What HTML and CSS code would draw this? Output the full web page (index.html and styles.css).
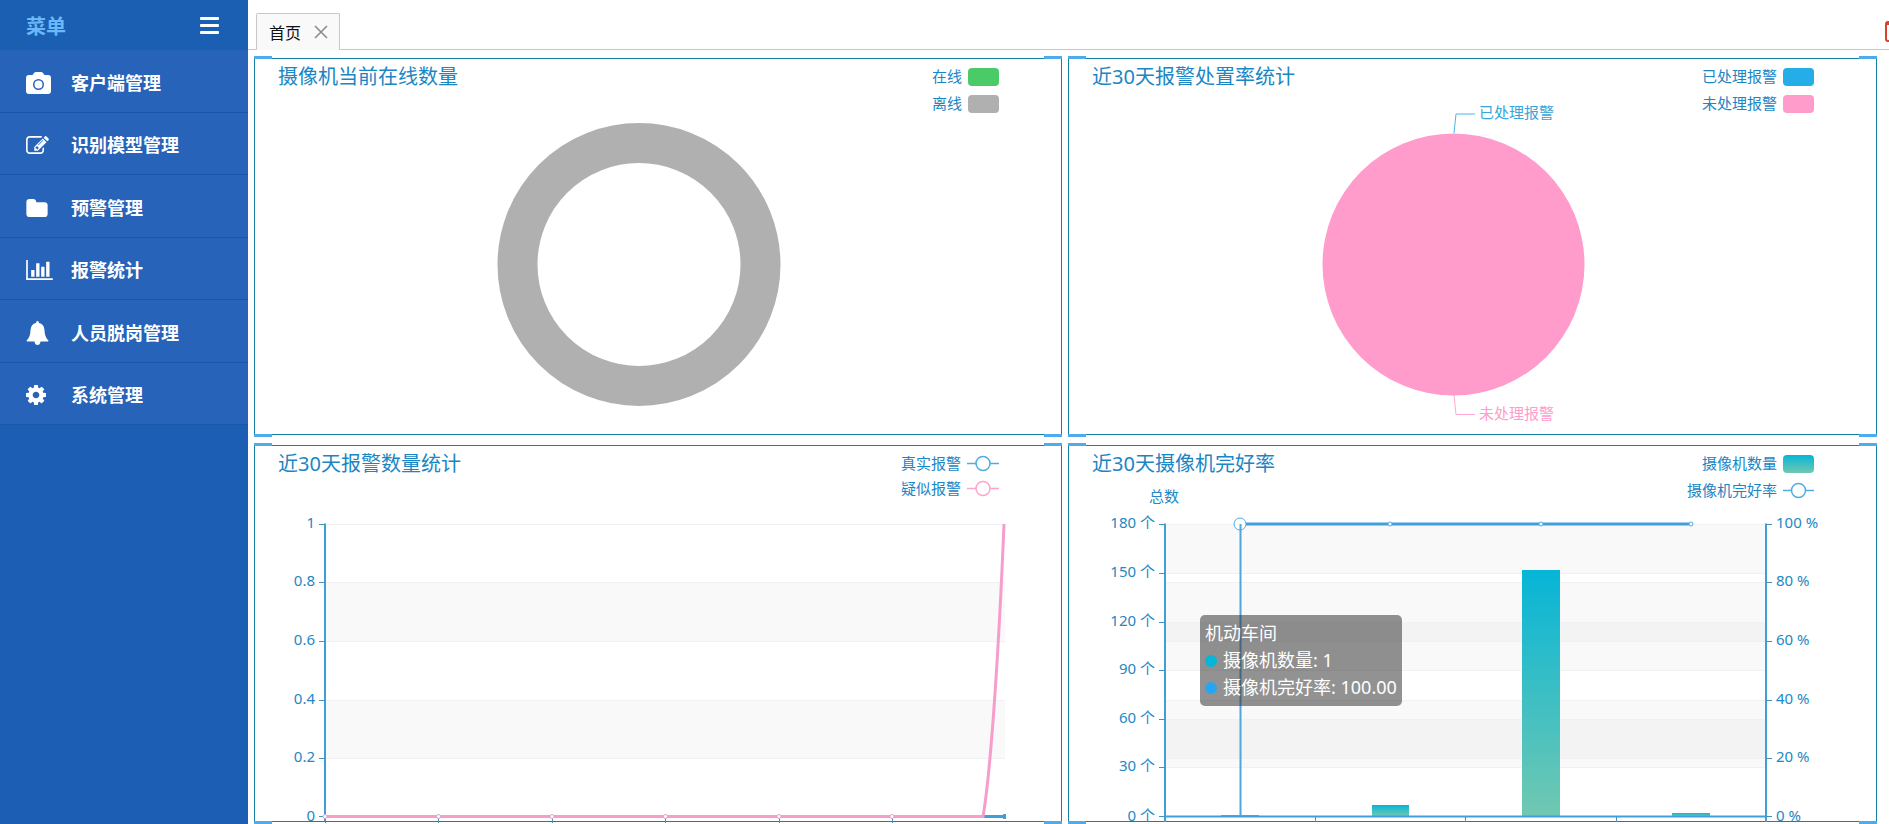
FILE: index.html
```html
<!DOCTYPE html>
<html lang="zh-CN">
<head>
<meta charset="utf-8">
<title>首页</title>
<link rel="stylesheet" href="styles.css">
</head>
<body>
<div class="app">
  <aside class="sidebar">
    <header class="brand">
      <span class="brand-name">菜单</span>
      <button class="toggle" type="button" aria-label="折叠菜单">
        <svg width="19" height="17" viewBox="0 0 19 17"><rect width="19" height="3" rx="1"/><rect y="7" width="19" height="3" rx="1"/><rect y="14" width="19" height="3" rx="1"/></svg>
      </button>
    </header>
    <nav class="menu">
      <a class="menu-item" href="#client"><span class="menu-icon"><svg width="25" height="22" viewBox="0 0 25 22"><path fill-rule="evenodd" d="M3 3h3.500L8 1Q8.700 0 10 0h5q1.300 0 2 1l1.500 2H22q3 0 3 3v13q0 3-3 3H3q-3 0-3-3V6q0-3 3-3zM12.500 7a5.500 5.500 0 1 0 0 11a5.500 5.500 0 1 0 0-11zM12.500 8.500a4 4 0 1 1 0 8a4 4 0 1 1 0-8z"/></svg></span>客户端管理</a>
      <a class="menu-item" href="#model"><span class="menu-icon"><svg width="23" height="18" viewBox="0 128 1792 1408"><path d="M888 1184l116-116-152-152-116 116v56h96v96h56zm440-720q-16-16-33 1l-350 350q-17 17-1 33t33-1l350-350q17-17 1-33zm80 594v190q0 119-84.500 203.500t-203.500 84.500h-832q-119 0-203.500-84.500t-84.500-203.500v-832q0-119 84.500-203.500t203.500-84.500h832q63 0 117 25 15 7 18 23 3 17-9 29l-49 49q-14 14-32 8-23-6-45-6h-832q-66 0-113 47t-47 113v832q0 66 47 113t113 47h832q66 0 113-47t47-113v-126q0-13 9-22l64-64q15-15 35-7t20 29zm-96-738l288 288-672 672h-288v-288zm444 132l-92 92-288-288 92-92q28-28 68-28t68 28l152 152q28 28 28 68t-28 68z"/></svg></span>识别模型管理</a>
      <a class="menu-item" href="#warning"><span class="menu-icon"><svg width="22" height="18" viewBox="64 128 1664 1408"><path d="M1728 608v704q0 92-66 158t-158 66h-1216q-92 0-158-66t-66-158v-960q0-92 66-158t158-66h320q92 0 158 66t66 158v32h672q92 0 158 66t66 158z"/></svg></span>预警管理</a>
      <a class="menu-item" href="#alarm"><span class="menu-icon"><svg width="27" height="20" viewBox="0 128 2048 1536"><path d="M640 896v512h-256v-512h256zm384-512v1024h-256v-1024h256zm1024 1152v128h-2048v-1536h128v1408h1920zm-640-896v768h-256v-768h256zm384-384v1152h-256v-1152h256z"/></svg></span>报警统计</a>
      <a class="menu-item" href="#absence"><span class="menu-icon"><svg width="23" height="24" viewBox="0 0 23 24"><path d="M11.500 0Q13 0 13 2Q18 3 18.500 9Q18.500 16 22.500 19.500Q22.500 20.500 21.500 20.500H14.500Q14 24 11.500 24Q9 24 8.500 20.500H1.500Q.5 20.500.5 19.500Q4.500 16 4.500 9Q5 3 10 2Q10 0 11.500 0z"/></svg></span>人员脱岗管理</a>
      <a class="menu-item" href="#system"><span class="menu-icon"><svg width="20" height="20" viewBox="128 128 1536 1536"><path d="M1152 896q0-106-75-181t-181-75-181 75-75 181 75 181 181 75 181-75 75-181zm512-109v222q0 12-8 23t-20 13l-185 28q-19 54-39 91 35 50 107 138 10 12 10 25t-9 23q-27 37-99 108t-94 71q-12 0-26-9l-138-108q-44 23-91 38-16 136-29 186-7 28-36 28h-222q-14 0-24.500-8.500t-11.500-21.500l-28-184q-49-16-90-37l-141 107q-10 9-25 9-14 0-25-11-126-114-165-168-7-10-7-23 0-12 8-23 15-21 51-66.500t54-70.500q-27-50-41-99l-183-27q-13-2-21-12.500t-8-23.500v-222q0-12 8-23t19-13l186-28q14-46 39-92-40-57-107-138-10-12-10-24 0-10 9-23 26-36 98.500-107.500t94.500-71.500q13 0 26 10l138 107q44-23 91-38 16-136 29-186 7-28 36-28h222q14 0 24.500 8.500t11.500 21.500l28 184q49 16 90 37l142-107q9-9 24-9 13 0 25 10 129 119 165 170 7 8 7 22 0 12-8 23-15 21-51 66.500t-54 70.500q26 50 41 98l183 28q13 2 21 12.500t8 23.500z"/></svg></span>系统管理</a>
    </nav>
  </aside>

  <main class="main">
    <div class="tabbar">
      <div class="tab">
        <a class="tab-link" href="#home">首页</a>
        <button class="tab-close" type="button" aria-label="关闭"><svg width="14" height="14" viewBox="0 0 14 14"><path d="M1 1l12 12M13 1L1 13"/></svg></button>
      </div>
      <button class="clear" type="button" aria-label="关闭全部"><svg width="20" height="21" viewBox="0 0 20 21"><rect x="1" y="1" width="18" height="19" rx="2"/><path d="M1 3h18"/></svg></button>
    </div>

    <div class="board">
      <section class="panel">
        <header class="panel-head">
          <h2 class="panel-title">摄像机当前在线数量</h2>
          <ul class="legend">
            <li>在线<i class="swatch green"></i></li>
            <li>离线<i class="swatch gray"></i></li>
          </ul>
        </header>
        <svg class="chart" viewBox="0 0 806 375">
          <circle class="ring" cx="384" cy="205.500" r="121.500"/>
        </svg>
      </section>

      <section class="panel">
        <header class="panel-head">
          <h2 class="panel-title">近30天报警处置率统计</h2>
          <ul class="legend">
            <li>已处理报警<i class="swatch blue"></i></li>
            <li>未处理报警<i class="swatch pink"></i></li>
          </ul>
        </header>
        <svg class="chart" viewBox="0 0 807 375">
          <circle class="pie" cx="384.500" cy="205.500" r="131"/>
          <path class="lead lead-blue" d="M385 74L387 55H406"/>
          <text class="label-blue" x="410" y="59">已处理报警</text>
          <path class="lead lead-pink" d="M385 336L387 355.500H406"/>
          <text class="label-pink" x="410" y="360">未处理报警</text>
        </svg>
      </section>

      <section class="panel">
        <header class="panel-head">
          <h2 class="panel-title">近30天报警数量统计</h2>
          <ul class="legend legend-lines">
            <li>真实报警<svg class="marker marker-blue" width="32" height="17" viewBox="0 0 32 17"><path d="M0 8.500h32"/><circle cx="16" cy="8.500" r="7"/></svg></li>
            <li>疑似报警<svg class="marker marker-pink" width="32" height="17" viewBox="0 0 32 17"><path d="M0 8.500h32"/><circle cx="16" cy="8.500" r="7"/></svg></li>
          </ul>
        </header>
        <svg class="chart" viewBox="0 0 806 375">
          <path class="band" d="M70 136h680v59H70zM70 254h680v58H70z"/>
          <path class="grid" d="M70 78.500h680M70 136.500h680M70 195.500h680M70 254.500h680M70 312.500h680"/>
          <path class="axis" d="M70 77.500V375"/>
          <path class="tick" d="M64 78.500h6M64 136.500h6M64 195.500h6M64 254.500h6M64 312.500h6M64 370.500h6M70.500 371v6M183.500 371v6M297.500 371v6M410.500 371v6M524.500 371v6M637.500 371v6"/>
          <g class="end">
            <text x="60" y="82">1</text>
            <text x="60" y="140">0.8</text>
            <text x="60" y="199">0.6</text>
            <text x="60" y="258">0.4</text>
            <text x="60" y="316">0.2</text>
            <text x="60" y="375">0</text>
          </g>
          <path class="line-blue" d="M70 370.500H750M749.500 368v5"/>
          <path class="line-pink" d="M70 370.500H728C736 325 744 200 749 78"/>
          <g class="dot dot-pink"><circle cx="70" cy="370.500" r="2"/><circle cx="183.500" cy="370.500" r="2"/><circle cx="297" cy="370.500" r="2"/><circle cx="410.500" cy="370.500" r="2"/><circle cx="524" cy="370.500" r="2"/><circle cx="637" cy="370.500" r="2"/></g>
        </svg>
      </section>

      <section class="panel">
        <header class="panel-head">
          <h2 class="panel-title">近30天摄像机完好率</h2>
          <ul class="legend">
            <li>摄像机数量<i class="swatch teal"></i></li>
            <li>摄像机完好率<svg class="marker marker-blue" width="31" height="17" viewBox="0 0 31 17"><path d="M0 8.500h31"/><circle cx="15.500" cy="8.500" r="7"/></svg></li>
          </ul>
        </header>
        <svg class="chart" viewBox="0 0 807 375">
          <defs><linearGradient id="bar" x1="0" y1="0" x2="0" y2="1"><stop offset="0" stop-color="#06b5d7"/><stop offset="1" stop-color="#71c8b1"/></linearGradient></defs>
          <path class="band" d="M96 78h601v49H96zM96 176h601v48H96zM96 273h601v48H96z"/>
          <path class="band" d="M96 136h601v59H96zM96 254h601v58H96z"/>
          <path class="grid" d="M96 78.500h601M96 127.500h601M96 176.500h601M96 224.500h601M96 273.500h601M96 321.500h601M96 136.500h601M96 195.500h601M96 254.500h601M96 312.500h601"/>
          <g fill="url(#bar)">
            <rect x="152" y="369" width="38" height="1"/>
            <rect x="303" y="359" width="37" height="11"/>
            <rect x="453" y="124" width="38" height="246"/>
            <rect x="603" y="367" width="38" height="3"/>
          </g>
          <path class="axis" d="M96 77.500V376M697 77.500V376M96 370.500H697"/>
          <path class="tick" d="M90 78.500h6M90 127.500h6M90 176.500h6M90 224.500h6M90 273.500h6M90 321.500h6M90 370.500h6M697 78.500h6M697 136.500h6M697 195.500h6M697 254.500h6M697 312.500h6M697 370.500h6M246.500 371v5M396.500 371v5M547.500 371v5"/>
          <text x="80" y="56">总数</text>
          <g class="end">
            <text x="86" y="82">180 个</text>
            <text x="86" y="131">150 个</text>
            <text x="86" y="180">120 个</text>
            <text x="86" y="228">90 个</text>
            <text x="86" y="277">60 个</text>
            <text x="86" y="325">30 个</text>
            <text x="86" y="375">0 个</text>
          </g>
          <g>
            <text x="707" y="82">100 %</text>
            <text x="707" y="140">80 %</text>
            <text x="707" y="199">60 %</text>
            <text x="707" y="258">40 %</text>
            <text x="707" y="316">20 %</text>
            <text x="707" y="375">0 %</text>
          </g>
          <path class="line-blue" d="M171 78H622"/>
          <g class="dot dot-blue"><circle cx="171" cy="78" r="6"/><circle cx="321" cy="78" r="2"/><circle cx="472" cy="78" r="2"/><circle cx="622" cy="78" r="2"/></g>
          <path class="pointer" d="M171.500 78V370"/>
        </svg>
        <div class="tooltip" role="tooltip">
          <div>机动车间</div>
          <div><i class="bullet cyan"></i>摄像机数量: 1</div>
          <div><i class="bullet sky"></i>摄像机完好率: 100.00</div>
        </div>
      </section>
    </div>
  </main>
</div>
</body>
</html>
```
FILE: styles.css
```css
* {
  box-sizing: border-box;
}

body {
  margin: 0;
  overflow: hidden;
  background: #fff;
  font-family: "Noto Sans", "Noto Sans CJK SC", sans-serif;
  font-size: 15px;
}

button {
  padding: 0;
  border: 0;
  background: none;
}

svg {
  display: block;
}

.app {
  display: grid;
  grid-template-columns: 248px minmax(0, 1fr);
  min-height: 100vh;
}

/* sidebar */
.sidebar {
  background: #1b5eb3;
}

.brand {
  display: flex;
  align-items: center;
  justify-content: space-between;
  height: 50px;
  padding: 1px 29px 0 26px;
  background: #1b5fb2;
}

.brand-name {
  color: #6ab8f8;
  font-size: 20px;
  font-weight: bold;
}

.toggle {
  fill: #fff;
}

.menu {
  display: grid;
  grid-auto-rows: 1fr;
  height: 375px;
}

.menu-item {
  display: flex;
  align-items: center;
  padding: 4px 0 0 26px;
  border-bottom: 1px solid #1a57ab;
  background: #2663b9;
  color: #fff;
  font-size: 18px;
  font-weight: bold;
  line-height: 24px;
  text-decoration: none;
}

.menu-icon {
  width: 45px;
  fill: #fff;
}

/* tabs */
.main {
  display: flex;
  flex-direction: column;
}

.tabbar {
  display: flex;
  align-items: flex-end;
  justify-content: space-between;
  height: 50px;
  padding-left: 8px;
  border-bottom: 1px solid #c8c8c8;
}

.tab {
  display: flex;
  align-items: center;
  gap: 13px;
  height: 37px;
  margin-bottom: -1px;
  padding: 0 11px 0 12px;
  border: 1px solid #c8c8c8;
  border-bottom: 0;
  border-radius: 2px 2px 0 0;
  background: #f9f9f9;
}

.tab-link {
  color: #111;
  font-size: 16px;
  text-decoration: none;
}

.tab-close {
  fill: none;
  stroke: #888;
  stroke-width: 1.5;
}

.clear {
  margin: 0 -16px 7px 0;
  fill: #fff;
  stroke: #d9402f;
  stroke-width: 2;
}

/* dashboard */
.board {
  display: grid;
  flex: 1;
  grid-template-columns: 808fr 809fr;
  grid-auto-rows: minmax(300px, 1fr);
  gap: 10px 6px;
  padding: 8px 12px 2px 6px;
}

.panel {
  position: relative;
  display: grid;
  grid-template: minmax(0, 1fr) / minmax(0, 1fr);
  border: 1px solid #177ea6;
}

.panel::before,
.panel::after {
  content: "";
  position: absolute;
  right: -1px;
  left: -1px;
  height: 3px;
  background:
    linear-gradient(#4eaced, #4eaced) left / 18px 3px no-repeat,
    linear-gradient(#4eaced, #4eaced) right / 18px 3px no-repeat;
}

.panel::before {
  top: -3px;
}

.panel::after {
  bottom: -3px;
}

.panel-head {
  z-index: 1;
  display: flex;
  grid-area: 1 / 1;
  align-items: flex-start;
  align-self: start;
  justify-content: space-between;
  padding: 4px 62px 0 23px;
  color: #1a86c4;
}

.panel-title {
  margin: 0;
  font-size: 20px;
  font-weight: normal;
  line-height: 28px;
}

.legend {
  display: grid;
  gap: 3px;
  margin: 0;
  list-style: none;
}

.legend-lines {
  gap: 1px;
}

.legend li {
  display: flex;
  align-items: center;
  justify-content: flex-end;
  gap: 6px;
  height: 24px;
}

.swatch,
.marker {
  margin-top: 3px;
}

.swatch {
  width: 31px;
  height: 18px;
  border-radius: 4px;
}

.green { background: #4bcb68; }
.gray { background: #b0b0b0; }
.blue { background: #24ade6; }
.pink { background: #ff9ccb; }
.teal { background: linear-gradient(#06b5d7, #71c8b1); }

.marker {
  fill: #fff;
  stroke-width: 1.5;
}

.marker-blue { stroke: #4fade0; }
.marker-pink { stroke: #ffa3cd; }

/* charts */
.chart {
  grid-area: 1 / 1;
  width: 100%;
  height: 100%;
  overflow: visible;
  fill: #2388c4;
}

.ring {
  fill: none;
  stroke: #b0b0b0;
  stroke-width: 40;
}

.pie { fill: #ff9ccb; }

.lead { fill: none; }
.lead-blue { stroke: #4fb5e0; }
.lead-pink { stroke: #ffa9d1; }
.label-blue { fill: #35a5da; }
.label-pink { fill: #ff9ccb; }

.band { fill: rgba(0, 0, 0, 0.024); }

.grid { stroke: #f0f1f3; }

.axis {
  fill: none;
  stroke: #3f9fdb;
  stroke-width: 2;
}

.tick { stroke: #3f93c9; }

.line-blue {
  fill: none;
  stroke: #3f9fdb;
  stroke-width: 3;
}

.line-pink {
  fill: none;
  stroke: #f79dcb;
  stroke-width: 3;
}

.dot { fill: #fff; }
.dot-pink { stroke: #e0a0cf; }
.dot-blue { stroke: #4fade8; }

.pointer {
  stroke: #4fa5dc;
  stroke-width: 2;
}

.end { text-anchor: end; }

.tooltip {
  position: absolute;
  z-index: 2;
  top: 169px;
  left: 131px;
  padding: 5px;
  border-radius: 5px;
  background: rgba(50, 50, 50, 0.53);
  color: #fff;
  font-size: 18px;
  line-height: 27px;
  white-space: nowrap;
}

.bullet {
  display: inline-block;
  width: 12px;
  height: 12px;
  margin-right: 6px;
  border-radius: 50%;
}

.cyan { background: #06b5d7; }
.sky { background: #27a5ee; }
```
